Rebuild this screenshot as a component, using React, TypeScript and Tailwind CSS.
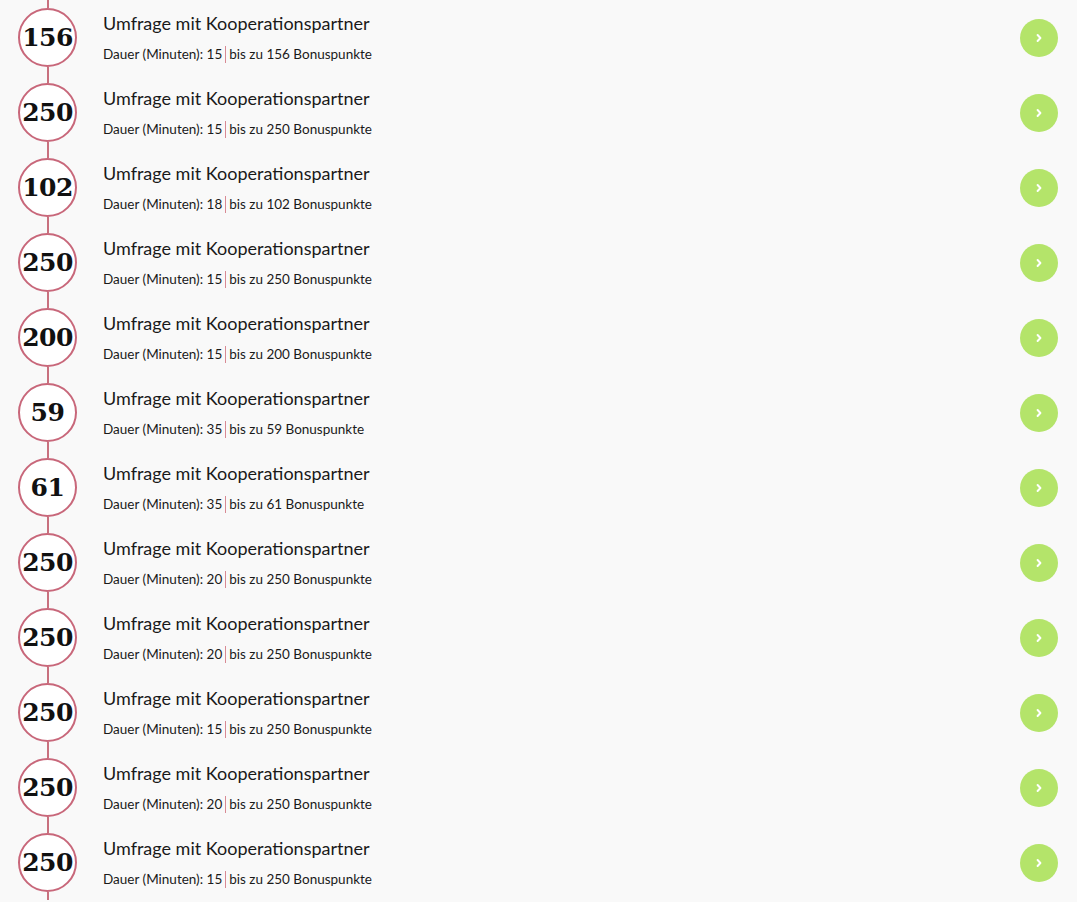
import {} from 'react'

const surveys = [
  { points: 156, minutes: 15 },
  { points: 250, minutes: 15 },
  { points: 102, minutes: 18 },
  { points: 250, minutes: 15 },
  { points: 200, minutes: 15 },
  { points: 59, minutes: 35 },
  { points: 61, minutes: 35 },
  { points: 250, minutes: 20 },
  { points: 250, minutes: 20 },
  { points: 250, minutes: 15 },
  { points: 250, minutes: 20 },
  { points: 250, minutes: 15 },
]

const Row = ({ points, minutes }: { points: number; minutes: number }) => {
  return (
    <div className="flex items-center h-[75px] pl-[18px] pr-[19px]">
      <div className="flex flex-col items-center w-[59px] h-full">
        <div className="w-[2px] h-[8px] bg-[#c8707e]" />
        <div className="w-[59px] h-[59px] shrink-0 rounded-full border-2 border-[#c8677a] bg-white flex items-center justify-center">
          <span className="font-['DejaVu_Serif',serif] font-bold text-[25px] leading-none text-[#111] tracking-[-0.5px]">
            {points}
          </span>
        </div>
        <div className="w-[2px] flex-1 bg-[#c8707e]" />
      </div>
      <div className="flex flex-col ml-[26px] -mt-[1px]">
        <div className="text-[18px] leading-[22px] text-[#1a1a1a]">Umfrage mit Kooperationspartner</div>
        <div className="mt-[12px] text-[13.5px] leading-[16px] text-[#1a1a1a] flex items-center">
          <span>Dauer (Minuten): {minutes}</span>
          <span className="w-px h-[17px] bg-[#d88a94] mx-[3px]" />
          <span>bis zu {points} Bonuspunkte</span>
        </div>
      </div>
      <div className="ml-auto w-[38px] h-[38px] rounded-full bg-[#b4e46a] flex items-center justify-center">
        <svg width="12" height="12" viewBox="0 0 12 12" fill="none">
          <path d="M4.6 3 L7.4 6 L4.6 9" stroke="white" strokeWidth="2" strokeLinecap="round" strokeLinejoin="round" />
        </svg>
      </div>
    </div>
  )
}

const App = () => {
  return (
    <div className="w-[1077px] h-[902px] overflow-hidden bg-[#f9f9f9] font-['Lato',sans-serif]">
      {surveys.map((s, i) => (
        <Row key={i} points={s.points} minutes={s.minutes} />
      ))}
    </div>
  )
}

export default App
